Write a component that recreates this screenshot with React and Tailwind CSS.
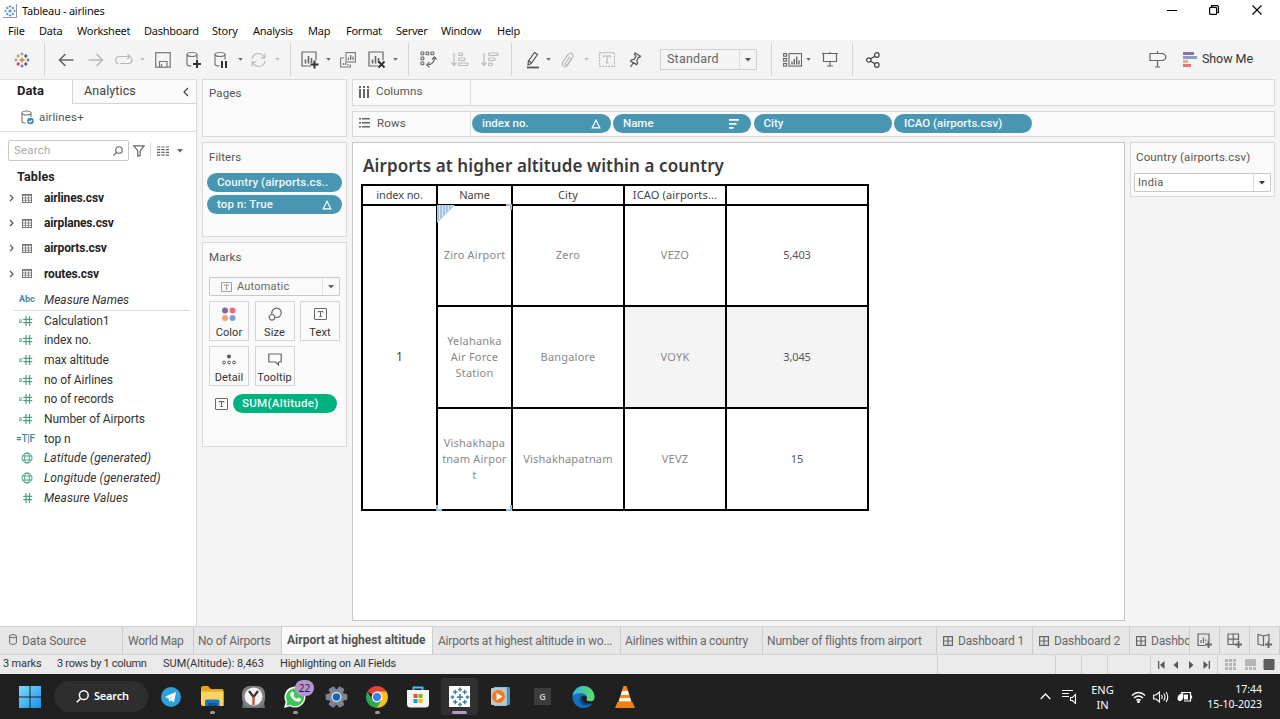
import React from "react";

const Svg = ({ w = 16, h = 16, vb, className = "", sw = 1.2, children }) => (
  <svg width={w} height={h} viewBox={vb || `0 0 ${w} ${h}`} fill="none" stroke="currentColor" strokeWidth={sw} className={`shrink-0 ${className}`}>
    {children}
  </svg>
);

const Caret = ({ className = "text-[#666]" }) => (
  <svg width="6" height="4" viewBox="0 0 6 4" className={`shrink-0 ${className}`}>
    <path d="M0 0h6L3 3.6z" fill="currentColor" />
  </svg>
);
const SmallCaret = ({ className = "text-[#666]" }) => (
  <svg width="5" height="3" viewBox="0 0 6 4" className={`shrink-0 ${className}`}>
    <path d="M0 0h6L3 3.6z" fill="currentColor" />
  </svg>
);

const Cell = ({ className, children }) => <div className={`flex h-full shrink-0 items-center ${className}`}>{children}</div>;
const Divider = ({ className }) => (
  <Cell className={className}>
    <div className="h-[33px] w-px bg-[#d4d4d4]" />
  </Cell>
);

const plus = (x, y, r) => `M${x - r} ${y}h${2 * r}M${x} ${y - r}v${2 * r}`;

const TableauLogo = ({ size = 16, mono = false }) => {
  const c = (v) => (mono ? "#4a83ad" : v);
  return (
    <svg width={size} height={size} viewBox="0 0 16 16" fill="none" strokeWidth="1.2" className="shrink-0">
      <path d={plus(8, 8, 2.5)} stroke={c("#e8762c")} strokeWidth="1.4" />
      <path d={plus(8, 2, 1.6)} stroke={c("#7199a6")} />
      <path d={plus(8, 14, 1.6)} stroke={c("#5b6591")} />
      <path d={plus(2, 8, 1.5)} stroke={c("#7199a6")} />
      <path d={plus(14, 8, 1.5)} stroke={c("#5b6591")} />
      <path d={plus(4.2, 4, 1.8)} stroke={c("#eb912c")} />
      <path d={plus(11.8, 4, 1.8)} stroke={c("#1f457e")} />
      <path d={plus(4.2, 12, 1.8)} stroke={c("#c72035")} />
      <path d={plus(11.8, 12, 1.8)} stroke={c("#1f457e")} />
    </svg>
  );
};

const Cylinder = ({ children }) => (
  <Svg w={16} h={18} className="text-[#777]">
    <ellipse cx="6" cy="3.5" rx="5" ry="2" />
    <path d="M1 3.5v9.5q0 2 4.5 2M11 3.5v5" />
    {children}
  </Svg>
);

const ChartBox = ({ children }) => (
  <Svg w={18} h={18} className="text-[#666]">
    <path d="M10 15H1V1h14v8" />
    <path d="M4.500 8.500v4M7.500 5v7.500M10.500 7v5" strokeWidth="1.6" />
    {children}
  </Svg>
);

const TBox = ({ w = 13, h = 12, className = "text-[#666]" }) => (
  <Svg w={w} h={h} vb="0 0 13 12" sw={1} className={className}>
    <rect x=".5" y=".5" width="12" height="11" rx=".5" />
    <path d="M4 4.500V3.500h5v1M6.500 3.500v5M5.300 8.500h2.400" />
  </Svg>
);

const Delta = () => (
  <Svg w={10} h={10} sw={1.2} className="text-white">
    <path d="M5 1.200L8.800 8.800H1.200z" />
  </Svg>
);

const Pill = ({ className = "", icon, children }) => (
  <div className={`flex h-[19px] shrink-0 items-center justify-between rounded-full bg-[#4996b2] pr-[10px] pl-[10px] text-[11.5px] font-medium text-[#f2f9fb] ${className}`}>
    <span className="whitespace-nowrap">{children}</span>
    {icon}
  </div>
);

const menus = [
  ["File", "w-[31px]"], ["Data", "w-[38px]"], ["Worksheet", "w-[67px]"], ["Dashboard", "w-[68px]"], ["Story", "w-[41px]"],
  ["Analysis", "w-[55px]"], ["Map", "w-[38px]"], ["Format", "w-[50px]"], ["Server", "w-[45px]"], ["Window", "w-[56px]"], ["Help", "w-[40px]"],
];

function WindowHeader() {
  return (
    <header className="bg-white text-[#111]">
      <div className="flex h-[22px] items-center pl-[3px]">
        <div className="flex size-[14px] items-center justify-center border-r border-b border-[#999]">
          <TableauLogo size={12} mono />
        </div>
        <span className="ml-[5px] text-[11px] tracking-[-0.25px]">Tableau - airlines</span>
        <div className="ml-auto flex items-center pr-[18px] pb-[2px] text-black">
          <Svg w={10} h={10} sw={1}><path d="M0 5.500h10" /></Svg>
          <Svg w={10} h={10} sw={1.2} className="ml-[32px]">
            <rect x=".6" y="2.400" width="7" height="7" rx="1" />
            <path d="M2.500 2V.600h5.400q1.500 0 1.500 1.500V7.500H8" />
          </Svg>
          <Svg w={10} h={10} sw={1.1} className="ml-[33px]"><path d="M.5.5l9 9M9.500.5l-9 9" /></Svg>
        </div>
      </div>
      <nav className="flex h-[18px] items-center pl-2 text-[11px] tracking-[-0.25px]">
        {menus.map(([m, w]) => <span key={m} className={w}>{m}</span>)}
      </nav>
    </header>
  );
}

function Toolbar() {
  return (
    <div className="flex h-[39px] items-center bg-[#f4f4f4] pl-[14px] font-[Roboto]">
      <Cell className="w-[30px]"><TableauLogo /></Cell>
      <Divider className="w-[14px]" />
      <Cell className="w-[30px]"><Svg w={16} h={14} sw={1.6} className="text-[#666]"><path d="M15.500 7H1.500M7.500 1L1.500 7l6 6" /></Svg></Cell>
      <Cell className="w-[27px]"><Svg w={16} h={14} sw={1.500} className="text-[#b8b8b8]"><path d="M.5 7h14M8.500 1l6 6-6 6" /></Svg></Cell>
      <Cell className="w-[25px]"><Svg w={18} h={12} className="text-[#b8b8b8]"><path d="M3.500 9.500h-1Q.8 9 .8 6t2.700-3.500H15M12.200 0l3 2.500-3 2.500M5 9.500h9Q17 9 17 6q0-1.500-1-2.500" /></Svg></Cell>
      <Cell className="w-[15px]"><SmallCaret className="text-[#bbb]" /></Cell>
      <Cell className="w-[31px]"><Svg w={16} h={16} className="text-[#777]"><rect x=".7" y=".7" width="14.500" height="14.500" /><path d="M4.500 15V9.500h7.500V15M6.500 15v-3" /></Svg></Cell>
      <Cell className="w-[28px]"><Cylinder><path d="M11 9v8M7 13h8" stroke="#333" strokeWidth="2" /></Cylinder></Cell>
      <Cell className="w-[24px]"><Cylinder><path d="M8 10v7M12 10v7" stroke="#333" strokeWidth="2" /></Cylinder></Cell>
      <Cell className="w-[12px]"><SmallCaret /></Cell>
      <Cell className="w-[25px]"><Svg w={17} h={16} className="text-[#bbb]"><path d="M2 7Q3 1.500 8.500 1.500q4 0 6 4M15 1.500v4.300h-4.300M15 9q-1 5.500-6.500 5.500-4 0-6-4M2 14.500v-4.300h4.300" /></Svg></Cell>
      <Cell className="w-[15px]"><SmallCaret className="text-[#bbb]" /></Cell>
      <Divider className="w-[11px]" />
      <Cell className="w-[25px]"><ChartBox><path d="M13.500 9.500v8M9.500 13.500h8" stroke="#333" strokeWidth="2" /></ChartBox></Cell>
      <Cell className="w-[14px]"><SmallCaret /></Cell>
      <Cell className="w-[28px]"><Svg w={16} h={16} sw={1.100} className="text-[#777]"><path d="M4 6H.6v9h9.800v-2.500" /><rect x="6" y=".6" width="9.400" height="9.400" /><path d="M8.500 5.500v2.500M10.700 3v5M13 4.500v3.500M3.500 11v2M5.700 11v2M8 12v1.500" strokeWidth="1.300" /></Svg></Cell>
      <Cell className="w-[25px]"><ChartBox><path d="M10.500 10.500l6 6M16.500 10.500l-6 6" stroke="#333" strokeWidth="2" /></ChartBox></Cell>
      <Cell className="w-[15px]"><SmallCaret /></Cell>
      <Divider className="w-[12px]" />
      <Cell className="w-[31px]">
        <Svg w={17} h={17} sw={1.100} className="text-[#666]">
          {[[1, 1], [6, 1], [11, 1], [1, 6], [1, 11]].map(([x, y]) => <rect key={`${x}-${y}`} x={x} y={y} width="2.800" height="2.800" rx=".5" />)}
          <path d="M14.500 6.500q0 6.500-7 7.500M12 8.500l2.600-2.600 2 2.600M9.500 11l-2.800 3 2.800 2.400" />
        </Svg>
      </Cell>
      <Cell className="w-[30px]"><Svg w={18} h={15} className="text-[#bbb]"><path d="M3 1v12.500M.5 10.500L3 13.500l2.500-3" /><rect x="7.500" y="1" width="4" height="2.500" rx="1" /><rect x="7.500" y="6" width="6.500" height="2.500" rx="1" /><rect x="7.500" y="11" width="9.500" height="2.500" rx="1" /></Svg></Cell>
      <Cell className="w-[30px]"><Svg w={18} h={15} className="text-[#bbb]"><path d="M3 1v12.500M.5 10.500L3 13.500l2.500-3" /><rect x="7.500" y="1" width="9.500" height="2.500" rx="1" /><rect x="7.500" y="6" width="6.500" height="2.500" rx="1" /><rect x="7.500" y="11" width="4" height="2.500" rx="1" /></Svg></Cell>
      <Divider className="w-[16px]" />
      <Cell className="w-[19px]"><Svg w={12} h={18} className="text-[#555]"><path d="M2.500 13.500L1 14l.5-4L7.500 1.500l3 2L4.500 12zM1.800 9.800l3 2.200" /><path d="M0 16.500h12" strokeWidth="1.800" /></Svg></Cell>
      <Cell className="w-[15px]"><SmallCaret /></Cell>
      <Cell className="w-[23px]"><Svg w={13} h={16} sw={1.100} className="text-[#b5b5b5]"><path d="M9 4.500L4.500 11q-.8 1.500.3 2 1 .5 1.800-.8L11.500 5q1.300-2.500-.7-3.700-2-1-3.500 1L2 10q-1.500 3 .5 4.400 2.300 1.200 4-1.200L11 6.500" /></Svg></Cell>
      <Cell className="w-[15px]"><SmallCaret className="text-[#bbb]" /></Cell>
      <Cell className="w-[30px]"><Svg w={16} h={15} sw={1.100} className="text-[#b5b5b5]"><rect x=".6" y=".6" width="14.800" height="13.800" strokeDasharray="2 1" /><path d="M4.500 5.500V4h7v1.500M8 4v7M6.500 11h3" /></Svg></Cell>
      <Cell className="w-[31px]"><Svg w={13} h={16} className="text-[#555]"><path d="M6 1l5.500 3.200-.8 1.200-1.200-.2-1.800 3.500.9 2.600-1 1.300-6-3.600.9-1.300 2.600-.3 1.900-3.400-1.500-1.600zM4.300 10.800L1.500 15" /></Svg></Cell>
      <div className="mr-[14px] flex h-[21px] w-[97px] shrink-0 items-center border border-[#cfcfcf] pl-[6px] text-[12.5px] tracking-[0.2px] text-[#666]">
        <span>Standard</span>
        <div className="ml-auto flex h-full w-[17px] items-center justify-center border-l border-[#ddd]"><Caret className="text-[#555]" /></div>
      </div>
      <Divider className="w-[12px]" />
      <Cell className="w-[23px]"><Svg w={20} h={14} sw={1.100} className="text-[#666]"><rect x=".6" y=".6" width="3" height="2.600" /><rect x=".6" y="5.500" width="3" height="2.600" /><rect x=".6" y="10.500" width="3" height="2.600" /><rect x="6" y=".6" width="12.500" height="12.500" /><path d="M9 8.500v3M11.300 6v5.500M13.700 3.500v8M16 7.500v4" strokeWidth="1.400" /></Svg></Cell>
      <Cell className="w-[16px]"><SmallCaret /></Cell>
      <Cell className="w-[30px]"><Svg w={16} h={15} className="text-[#666]"><path d="M0 1.500h16M1.500 1.500v8h13v-8M8 9.500v4.500M5 14h6M8 0v1.500" /></Svg></Cell>
      <Divider className="w-[14px]" />
      <Cell><Svg w={14} h={16} className="text-[#444]"><circle cx="2.800" cy="8" r="2.200" /><circle cx="10.800" cy="3" r="2.300" /><circle cx="10.800" cy="13" r="2.300" /><path d="M4.700 6.800l4.200-2.600M4.700 9.200l4.200 2.600" /></Svg></Cell>
      <div className="ml-auto flex items-center pr-[27px]">
        <Svg w={18} h={17} className="text-[#666]"><path d="M1 2.500h12.500q3 .8 3.500 3.500-.5 2.700-3.500 3.500H1zM8.500 0v2.500M8.500 9.500V16M6 16h5" /></Svg>
        <svg width="14" height="15" className="ml-[16px]">
          <path d="M0 0h11v3H0z" fill="#8a719b" /><path d="M0 4h14v3H0z" fill="#7fa3c9" />
          <path d="M0 8h5v3H0z" fill="#f0a88a" /><path d="M0 12h8v3H0z" fill="#e8717f" />
        </svg>
        <span className="ml-[5px] text-[12.5px] tracking-[-0.05px] text-[#333]">Show Me</span>
      </div>
    </div>
  );
}

const HashIcon = ({ calc }) => (
  <Svg w={14} h={10} sw={1.200} className="text-[#4ba581]">
    {calc && <path d="M0 4h3.200M0 6.200h3.200" />}
    <path d="M7 0v10M10.500 0v10M4.200 3.300h9M4.200 6.700h9" />
  </Svg>
);
const Globe = () => (
  <Svg w={12} h={12} sw={1} className="text-[#4ba581]">
    <circle cx="6" cy="6" r="5" /><ellipse cx="6" cy="6" rx="2.300" ry="5" /><path d="M1.500 4h9M1.500 8h9" />
  </Svg>
);

const fields = [
  ["calc", "Calculation1"], ["calc", "index no."], ["calc", "max altitude"], ["calc", "no of Airlines"], ["calc", "no of records"],
  ["calc", "Number of Airports"], ["bool", "top n"], ["geo", "Latitude (generated)"], ["geo", "Longitude (generated)"], ["num", "Measure Values"],
];

function DataPane() {
  return (
    <aside className="flex w-[197px] shrink-0 flex-col border-r border-[#d9d9d9] bg-white">
      <div className="flex h-[25px] shrink-0 border-t border-[#ddd]">
        <div className="w-[72px] pt-[1px] pl-[17px] text-[13px] font-bold tracking-[0.1px] text-[#222]">Data</div>
        <div className="flex flex-1 items-center justify-between border-b border-l border-[#d4d4d4] bg-[#fafafa] pr-[7px] pl-[11px] text-[12.5px] tracking-[0.1px] text-[#444]">
          Analytics
          <Svg w={6} h={10}><path d="M5 1L1 5l4 4" /></Svg>
        </div>
      </div>
      <div className="flex h-[28px] items-center border-b border-[#e0e0e0] pl-[21px] text-[11.5px] tracking-[0.15px] text-[#555]">
        <svg width="13" height="15" fill="none" stroke="#777" strokeWidth="1.100" className="mr-[5px]">
          <ellipse cx="5.500" cy="3" rx="4.500" ry="2" /><path d="M1 3v8.500q0 1.500 3.500 1.500M10 3v4" />
          <circle cx="9.500" cy="11" r="3.300" fill="#3d87a8" stroke="none" /><path d="M8 11l1.200 1.200 2-2.200" stroke="#fff" />
        </svg>
        airlines+
      </div>
      <div className="mt-[8px] flex h-[21px] items-center pl-[8px] text-[#666]">
        <div className="flex h-full w-[121px] items-center justify-between rounded-[2px] border border-[#c8c8c8] pr-[5px] pl-[5px] text-[11.5px] tracking-[0.2px] text-[#aaa]">
          Search
          <Svg w={10} h={10} sw={1.100} className="text-[#666]"><circle cx="6" cy="4" r="3.300" /><path d="M3.500 6.500L.5 9.500" /></Svg>
        </div>
        <Svg w={12} h={12} className="ml-[4px]"><path d="M.8.800h10.400L7.200 6v4.500l-2.400.8V6z" /></Svg>
        <div className="mx-[5px] h-[17px] w-px bg-[#ddd]" />
        <svg width="12" height="10" className="ml-px" stroke="#666" strokeWidth="1.200"><path d="M0 1h12M0 3.700h12M0 6.400h12M0 9.100h12" strokeDasharray="3.200 1.200" /></svg>
        <Caret className="ml-[8px]" />
      </div>
      <div className="mt-[6px] h-[19px] pl-[17px] text-[12.500px] leading-[19px] font-bold tracking-[0.15px] text-[#222]">Tables</div>
      {["airlines.csv", "airplanes.csv", "airports.csv", "routes.csv"].map((t) => (
        <div key={t} className="flex h-[25.2px] shrink-0 items-center pb-px pl-[9px] text-[12px] font-bold tracking-[-0.15px] text-[#222]">
          <Svg w={5} h={8} className="text-[#555]"><path d="M1 1l3 3-3 3" /></Svg>
          <svg width="10" height="9" className="mr-[12px] ml-[8px]" fill="none" stroke="#777"><rect x=".5" y=".5" width="9" height="8" /><path d="M0 1.500h10M0 4h10M0 6.300h10M3.500 2v7M6.500 2v7" strokeWidth=".8" /></svg>
          {t}
        </div>
      ))}
      <div className="mr-[6px] ml-[14px] flex h-[24px] shrink-0 items-center border-b border-[#d5d9dc] pt-[3px] pl-[5px] text-[12px] text-[#333] italic">
        <span className="w-[25px] text-[9px] font-bold text-[#4589a8] not-italic">Abc</span>
        Measure Names
      </div>
      <div>
        {fields.map(([k, t]) => (
          <div key={t} className="flex h-[19.7px] items-center pl-[16px] text-[12px] text-[#333]">
            <div className="flex w-[28px] items-center pl-[3px]">
              {k === "calc" && <HashIcon calc />}
              {k === "num" && <HashIcon />}
              {k === "geo" && <span className="ml-[2px]"><Globe /></span>}
              {k === "bool" && <span className="-ml-[3px] text-[10px] font-medium tracking-[-0.2px] text-[#3f87a6]">=T|F</span>}
            </div>
            <span className={k === "geo" || k === "num" ? "tracking-[0.1px] italic" : "tracking-[-0.1px]"}>{t}</span>
          </div>
        ))}
      </div>
    </aside>
  );
}

const MarkButton = ({ label, children }) => (
  <div className="flex h-[40px] w-[40px] flex-col items-center border border-[#d4d4d4] text-[11px] text-[#333]">
    <div className="flex h-[24px] items-center">{children}</div>
    <span className="leading-[13px]">{label}</span>
  </div>
);

function CardsColumn() {
  const card = "shrink-0 border border-[#d9d9d9] bg-[#fafafa]";
  return (
    <div className="flex w-[145px] shrink-0 flex-col gap-[5px] text-[11.5px] tracking-[0.1px] text-[#555]">
      <div className={`${card} h-[58px] pt-[5px] pl-[6px]`}>Pages</div>
      <div className={`${card} h-[95px] pt-[6px] pl-[4px]`}>
        <div className="pl-[2px]">Filters</div>
        <Pill className="mt-[7px] w-[135px]">Country (airports.cs..</Pill>
        <Pill className="mt-[3px] w-[135px]" icon={<Delta />}>top n: True</Pill>
      </div>
      <div className={`${card} h-[205px] pt-[6px] pl-[6px]`}>
        Marks
        <div className="mt-[11px] flex h-[19px] w-[131px] items-center rounded-[1px] border border-[#c8c8c8] pl-[11px] text-[11px] tracking-[0.2px] text-[#666]">
          <TBox w={11} h={10} className="mr-[5px] text-[#888]" />
          Automatic
          <div className="ml-auto flex h-full w-[17px] items-center justify-center border-l border-[#e2e2e2]"><Caret /></div>
        </div>
        <div className="mt-[5px] grid w-[131px] grid-cols-[40px_40px_40px] gap-x-[5.500px] gap-y-[5px]">
          <MarkButton label="Color">
            <svg width="14" height="14"><circle cx="3" cy="3.500" r="3" fill="#7c6a99" /><circle cx="10.500" cy="3.500" r="3" fill="#ee6b7c" /><circle cx="3" cy="11" r="3" fill="#f2a36f" /><circle cx="10.500" cy="11" r="3" fill="#7da0cc" /></svg>
          </MarkButton>
          <MarkButton label="Size">
            <Svg w={14} h={14} className="text-[#666]"><path d="M4 7a4.700 4.700 0 1 1 3.200 3.300" /><circle cx="4" cy="10.300" r="2.800" /></Svg>
          </MarkButton>
          <MarkButton label="Text"><TBox /></MarkButton>
          <MarkButton label="Detail">
            <Svg w={14} h={11} sw={1} className="text-[#555]"><circle cx="7" cy="2.500" r="2" fill="currentColor" stroke="none" /><circle cx="2" cy="8.500" r="1.400" /><circle cx="7" cy="8.500" r="1.400" /><circle cx="12" cy="8.500" r="1.400" /></Svg>
          </MarkButton>
          <MarkButton label="Tooltip">
            <Svg w={14} h={13} className="text-[#666]"><path d="M.8 1h12.400v8h-2.700v3L7.500 9H.8z" /></Svg>
          </MarkButton>
        </div>
        <div className="mt-[8px] flex items-center pl-[6px]">
          <TBox w={13} h={12} />
          <div className="ml-[5px] flex h-[19px] w-[104px] items-center rounded-full bg-[#00b180] pl-[9px] text-[11.5px] font-medium tracking-[0.3px] text-[#f2fbf8]">SUM(Altitude)</div>
        </div>
      </div>
    </div>
  );
}

const Shelf = ({ icon, label, children }) => (
  <div className="flex h-[26.500px] shrink-0 items-center border border-[#d9d9d9] bg-[#fafafa]">
    <div className="flex h-full w-[118px] items-center border-r border-[#ddd] pb-px pl-[6px] text-[11.5px] tracking-[0.15px] text-[#555]">
      {icon}
      {label}
    </div>
    <div className="flex items-center gap-[2.500px] pl-px">{children}</div>
  </div>
);

const Td = ({ className = "bg-white", children }) => (
  <div className={`flex items-center justify-center pb-px text-center whitespace-pre-line ${className}`}>{children}</div>
);

function Viz() {
  const hd = "bg-white text-[11px] text-[#444]";
  return (
    <main className="h-[479px] w-[773px] shrink-0 border border-[#c6c6c6] bg-white pt-[10px] pl-[8px] font-['Noto_Sans']">
      <h1 className="h-[31px] pl-[2px] text-[17px] leading-[25px] font-semibold tracking-[0.1px] text-[#3a3a3a]">Airports at higher altitude within a country</h1>
      <div className="relative grid w-[508px] grid-cols-[73px_73px_110px_100px_140px] grid-rows-[18px_99px_100px_100px] gap-[2px] bg-black p-[2px] text-[11px] leading-[16px] tracking-[0.2px] text-[#888]">
        <Td className={`${hd} tracking-[-0.1px]`}>index no.</Td><Td className={`${hd} tracking-[-0.1px]`}>Name</Td><Td className={hd}>City</Td><Td className={`${hd} tracking-[0.15px]`}>ICAO (airports...</Td><Td className={hd} />
        <Td className="row-span-3 bg-white text-[12px] text-[#444]">1</Td>
        <Td>Ziro Airport</Td><Td>Zero</Td><Td>VEZO</Td><Td className="bg-white tracking-[-0.1px] text-[#555]">5,403</Td>
        <Td>{"Yelahanka\nAir Force\nStation"}</Td><Td>Bangalore</Td><Td className="bg-[#f4f4f4]">VOYK</Td><Td className="bg-[#f4f4f4] tracking-[-0.1px] text-[#555]">3,045</Td>
        <Td>{"Vishakhapa\ntnam Airpor\nt"}</Td><Td>Vishakhapatnam</Td><Td>VEVZ</Td><Td className="bg-white tracking-[-0.1px] text-[#555]">15</Td>
        <svg width="76" height="307" className="absolute top-[20px] left-[75px]">
          <path d="M1 1h18L1 19z" fill="#a5c6de" />
          <path d="M3.500 1.500v14M6.500 1.500v11M9.500 1.500v8M12.500 1.500v5M15.500 1.500v2" stroke="#d7e8f3" />
          <path d="M70 0h6v6h-2V2h-4zM0 301v6h6v-2H2v-4zM76 301v6h-6v-2h4v-4z" fill="#9dbdd4" />
        </svg>
      </div>
    </main>
  );
}

function Workspace() {
  return (
    <div className="flex w-[923px] flex-col">
      <Shelf label="Columns" icon={<svg width="10" height="12" className="mr-[7px]" fill="#666"><path d="M0 0h2v2H0zM0 3h2v9H0zM4 0h2v2H4zM4 3h2v9H4zM8 0h2v2H8zM8 3h2v9H8z" /></svg>} />
      <div className="h-[5px] shrink-0" />
      <Shelf label="Rows" icon={<svg width="11" height="10" className="mr-[7px]" fill="#666"><path d="M0 0h2v1.600H0zM3 0h8v1.600H3zM0 4h2v1.600H0zM3 4h8v1.600H3zM0 8h2v1.600H0zM3 8h8v1.600H3z" /></svg>}>
        <Pill className="w-[138.500px]" icon={<Delta />}>index no.</Pill>
        <Pill className="w-[138px]" icon={<svg width="11" height="10" fill="#fff" className="mr-px"><path d="M0 0h10v1.800H0zM0 4h7.500v1.800H0zM0 8h4.500v1.800H0z" /></svg>}>Name</Pill>
        <Pill className="w-[138px]">City</Pill>
        <Pill className="w-[138px]">ICAO (airports.csv)</Pill>
      </Shelf>
      <div className="mt-[5px] flex gap-[5px]">
        <Viz />
        <div className="h-[55px] w-[145px] border border-[#d9d9d9] bg-[#fafafa] pt-[6px] pl-[3px] text-[11.5px] tracking-[0.15px] text-[#555]">
          <div className="pl-[2px]">Country (airports.csv)</div>
          <div className="mt-[7px] flex h-[19px] w-[137px] items-center rounded-[1px] border border-[#c8c8c8] bg-white pl-[3px] text-[11px] tracking-[0.3px]">
            India
            <div className="ml-auto flex h-full w-[17px] items-center justify-center border-l border-[#ddd]"><Caret className="text-[#333]" /></div>
          </div>
        </div>
      </div>
    </div>
  );
}

const GridIcon = () => <Svg w={10} h={10} className="mr-[5px]"><rect x=".6" y=".6" width="8.800" height="8.800" /><path d="M5 0v10M0 5h10" /></Svg>;

function SheetTabs() {
  const tab = "flex h-full shrink-0 items-center overflow-hidden border-r border-[#cdcdcd] whitespace-nowrap";
  return (
    <div className="flex h-[29px] border-y border-[#d2d2d2] bg-[#e6e6e6] text-[12px] tracking-[-0.15px] text-[#666]">
      <div className={`${tab} w-[123px] pl-[9px] tracking-[-0.1px]`}>
        <Svg w={8} h={11} sw={1} className="mr-[5px] mb-[2px]"><ellipse cx="4" cy="2.200" rx="3.400" ry="1.600" /><path d="M.6 2.200v6.600q0 1.600 3.400 1.600t3.400-1.600V2.200" /></Svg>
        Data Source
      </div>
      <div className={`${tab} w-[71px] pl-[5px] tracking-[-0.25px]`}>World Map</div>
      <div className={`${tab} w-[88px] pl-[4px] tracking-[-0.2px]`}>No of Airports</div>
      <div className={`${tab} w-[151px] bg-[#fafafa] pb-[2px] pl-[5px] font-bold tracking-[0px] text-[#555]`}>Airport at highest altitude</div>
      <div className={`${tab} w-[188px] pl-[5px] tracking-[-0.22px]`}>Airports at highest altitude in wo...</div>
      <div className={`${tab} w-[142px] pl-[4px] tracking-[-0.18px]`}>Airlines within a country</div>
      <div className={`${tab} w-[174px] pl-[4px] tracking-[-0.18px]`}>Number of flights from airport</div>
      <div className={`${tab} w-[96px] pl-[6px]`}><GridIcon />Dashboard 1</div>
      <div className={`${tab} w-[97px] pl-[6px]`}><GridIcon />Dashboard 2</div>
      <div className={`${tab} w-[60px] pl-[6px]`}><GridIcon />Dashbo</div>
      <div className={`${tab} w-[30px] justify-center`}><Svg w={15} h={15}><path d="M8 12.500H1V1h11v7M4 7v3M6.500 4.500V10M9 6.500V8" /><path d="M11.500 8v7M8 11.500h7" strokeWidth="1.800" /></Svg></div>
      <div className={`${tab} w-[30px] justify-center`}><Svg w={15} h={15}><path d="M8 11.500H1V1h10.500v6.500M6.200 1v10.500M1 6.200h10.500" /><path d="M11.500 8v7M8 11.500h7" strokeWidth="1.800" /></Svg></div>
      <div className={`${tab} w-[30px] justify-center`}><Svg w={15} h={15}><path d="M6.500 3v9.500L1 11V1.500zL12 1.500V8" /><path d="M11.500 8v7M8 11.500h7" strokeWidth="1.800" /></Svg></div>
    </div>
  );
}

function StatusBar() {
  const cell = "h-full shrink-0 border-l border-[#d0d0d0]";
  return (
    <div className="flex h-[19px] items-center bg-[#eaeaea] pl-[3px] text-[11px] tracking-[-0.15px] text-[#333]">
      <span className="w-[54px]">3 marks</span>
      <span className="w-[106px] tracking-[-0.3px]">3 rows by 1 column</span>
      <span className="w-[117px] tracking-[0px]">SUM(Altitude): 8,463</span>
      <span className="tracking-[-0.2px]">Highlighting on All Fields</span>
      <div className="ml-auto flex h-full">
        <div className={`${cell} w-[118px]`} />
        <div className={`${cell} w-[26px]`} />
        <div className={`${cell} w-[26px]`} />
        <div className={`${cell} w-[43px]`} />
        <div className={`${cell} flex w-[67px] items-center pl-[7px]`}>
          <svg width="53" height="8" fill="#555"><path d="M0 0h1.300v8H0zM6.500 0v8L2 4zM20 0v8l-4.500-4zM31 0v8l4.500-4zM45.500 0v8L50 4zM50.700 0H52v8h-1.300z" /></svg>
        </div>
        <div className={`${cell} flex w-[63px] items-center pl-[7px]`}>
          <svg width="50" height="11">
            <path d="M0 0h3v3H0zM4 0h3v3H4zM8 0h3v3H8zM0 4h3v3H0zM4 4h3v3H4zM8 4h3v3H8zM0 8h3v3H0zM4 8h3v3H4zM8 8h3v3H8zM20 0h11v7H20zM20 8h3v3h-3zM24 8h3v3h-3zM28 8h3v3h-3z" fill="#b5b5b5" />
            <path d="M39 .5h10v10H39z" fill="#5e5e5e" stroke="#555" />
          </svg>
        </div>
      </div>
    </div>
  );
}

const TaskIcon = ({ className, dot, children }) => (
  <div className={`relative flex h-full shrink-0 items-center ${className}`}>
    {children}
    {dot && <div className="absolute bottom-[5px] left-[9px] h-[3px] w-[5px] rounded-full bg-[#9a9a9a]" />}
  </div>
);

function Taskbar() {
  return (
    <footer className="flex h-[45px] items-center bg-[#202020] pl-[19px] text-white">
      <TaskIcon className="w-[35px]">
        <svg width="22" height="22"><defs><linearGradient id="win" x2="1" y2="1"><stop stopColor="#7fdcff" /><stop offset="1" stopColor="#1a8fe8" /></linearGradient></defs><path d="M0 0h10.500v10.500H0zM11.500 0H22v10.500H11.500zM0 11.500h10.500V22H0zM11.500 11.500H22V22H11.500z" fill="url(#win)" /></svg>
      </TaskIcon>
      <div className="mr-[13px] flex h-[31px] w-[94px] items-center rounded-full bg-[#2e2e2e] pl-[22px] text-[11px] font-semibold tracking-[-0.2px]">
        <Svg w={13} h={13} sw={1.500} className="mr-[5px]"><circle cx="7.800" cy="5.200" r="4.400" /><path d="M4.600 8.400L.8 12.300" /></Svg>
        Search
      </div>
      <TaskIcon className="w-[40px]">
        <svg width="20" height="20"><circle cx="10" cy="10" r="10" fill="#2ba0dc" /><path d="M4 9.800L15 5l-2 10.500-3.200-2.300-1.700 1.600-.3-3z" fill="#fff" /><path d="M7.800 11.500L13 7.200l-3.700 5" fill="#b9d9ee" /></svg>
      </TaskIcon>
      <TaskIcon className="w-[41px]" dot>
        <svg width="23" height="22" className="mt-px"><path d="M0 2q0-2 2-2h5l3 3h11q1.500 0 1.500 1.500V19H0z" fill="#e5a51c" /><path d="M0 5.500h22.500V20H2q-2 0-2-2z" fill="#fdd462" /><path d="M4 20v-5q0-1.500 1.500-1.500h11.500q1.500 0 1.500 1.500v5z" fill="#1976c5" /><path d="M7 17h9v3H7z" fill="#0f5596" /></svg>
      </TaskIcon>
      <TaskIcon className="w-[42px]">
        <svg width="23" height="22"><path d="M2 10L0 22h23l-2-12z" fill="#666d73" /><rect x="0" y="0" width="23" height="21" rx="8" fill="#7c8186" /><circle cx="11.500" cy="10.500" r="9" fill="#f1f1ef" /><path d="M7 5l4.500 6L16 5" stroke="#333" strokeWidth="2.200" fill="none" /><path d="M11.500 10.500V19" stroke="#c64a2f" strokeWidth="2.200" /></svg>
      </TaskIcon>
      <TaskIcon className="w-[41px]" dot>
        <svg width="23" height="22"><path d="M0 22l1.700-6A10.500 10.500 0 1 1 6 20.300z" fill="#fff" /><path d="M2.300 19.700l1-3.800A9 9 0 1 1 6.400 19z" fill="#3dc557" /><path d="M7.500 6q1.300-1 2 .3l.8 2-.9 1.300q1.200 2.300 3.600 3.300l1.400-1.400 2.500 1.200q.4 2.600-2.300 3-5.400-.2-8.200-6-.6-2.300 1.100-3.700z" fill="#fff" /></svg>
        <div className="absolute top-[6px] left-[11px] flex h-[16px] w-[19px] items-center justify-center rounded-full bg-[#b595d0] text-[10px] text-[#2a1b38]">22</div>
      </TaskIcon>
      <TaskIcon className="w-[41px]">
        <svg width="23" height="22" viewBox="-11.500 -11 23 22"><g fill="#7b8590">{[0, 60, 120].map((a) => <rect key={a} x="-3.300" y="-10.800" width="6.600" height="21.600" rx="1.500" transform={`rotate(${a + 30})`} />)}<circle r="8" /></g><circle r="5" fill="#e8eef4" /><circle r="3.800" fill="#1464b4" /></svg>
      </TaskIcon>
      <TaskIcon className="w-[41px]" dot>
        <svg width="22" height="22" viewBox="-11 -11 22 22"><path d="M0 0L-9.500-5.500A11 11 0 0 1 9.500-5.500z" fill="#e34133" /><path d="M0-5.500H9.500A11 11 0 0 1 0 11z" fill="#fbc116" /><path d="M-9.500-5.500A11 11 0 0 0 0 11L4.700 2.700-4.700 2.700z" fill="#2da94f" /><circle r="5.400" fill="#fff" /><circle r="4.200" fill="#3f7fe8" /></svg>
      </TaskIcon>
      <TaskIcon className="w-[34px]">
        <svg width="22" height="22"><path d="M6.500 5V1.500h9V5" fill="none" stroke="#4cc2f1" strokeWidth="1.800" /><path d="M0 4h22v14q0 3.500-3.500 3.500h-15Q0 21.500 0 18z" fill="#f3f3f3" /><path d="M6.500 8h4v4h-4z" fill="#f25022" /><path d="M11.500 8h4v4h-4z" fill="#7fba00" /><path d="M6.500 13h4v4h-4z" fill="#00a4ef" /><path d="M11.500 13h4v4h-4z" fill="#ffb900" /></svg>
      </TaskIcon>
      <div className="relative mr-[13px] flex h-[37px] w-[37px] shrink-0 items-center justify-center rounded-[4px] bg-[#303030]">
        <div className="flex size-[21px] items-center justify-center bg-white"><TableauLogo size={20} mono /></div>
        <div className="absolute bottom-px left-[11px] h-[3px] w-[15px] rounded-full bg-[#b595d0]" />
      </div>
      <TaskIcon className="w-[43px]">
        <svg width="19" height="19"><rect x="5" width="14" height="18" rx="1" fill="#4f8fb5" /><rect x="3" y="0" width="13" height="19" fill="#8fc1dc" /><rect x="0" y="1" width="15" height="17" rx="1" fill="#b9c8d0" /><circle cx="7.500" cy="9.500" r="6.500" fill="#ef7a21" /><path d="M5.500 5.800l6 3.700-6 3.700z" fill="#fff" /></svg>
      </TaskIcon>
      <TaskIcon className="w-[38px]"><div className="flex h-[17px] w-[17px] items-center justify-center bg-[#3d3d3d] text-[9px] font-semibold text-[#ccc]">G</div></TaskIcon>
      <TaskIcon className="w-[43px]">
        <svg width="23" height="22"><defs><linearGradient id="edge" x2="1" y2=".3"><stop stopColor="#2bb5ee" /><stop offset="1" stopColor="#5ddc62" /></linearGradient></defs><circle cx="11.500" cy="11" r="11" fill="#1570c4" /><path d="M.6 9.500A11 11 0 0 1 22.500 11q0 4-4.500 4.300-4 0-3.500-2.300Q16 8.500 10.500 7.300 4 6.500.6 9.500z" fill="url(#edge)" /><path d="M9 9.500q-3.500 5 .5 8.800 4.500 3 10.500-.3Q12 19 11 14z" fill="#0c4c94" /><path d="M10 10q2.700-1 4.600.800.8 1.700-.2 3 .1 1.600 5.600 1.800l1.600-1.200-.6 3Q13 19 10.500 15 9.500 12 10 10z" fill="#202020" /></svg>
      </TaskIcon>
      <TaskIcon>
        <svg width="20" height="22"><path d="M8.500 0h3l5.500 17H3z" fill="#f58a1a" /><path d="M7 5h6l1.200 4H5.800zM4.800 12h10.400l1 3.200H3.800z" fill="#f4f4f4" /><path d="M2.500 16h15l2.500 6H0z" fill="#f08010" /></svg>
      </TaskIcon>
      <div className="ml-auto flex items-center pr-[18px]">
        <Svg w={11} h={7} sw={1.300}><path d="M.7 6l4.800-5 4.800 5" /></Svg>
        <Svg w={16} h={15} sw={1.100} className="ml-[11px]"><path d="M0 1.500h11M0 4.500h7M0 7.500h7M8.500 8.500h2l3-3v9l-3-3h-2z" /></Svg>
        <div className="ml-[12px] w-[25px] text-center text-[11px] leading-[15px]">ENG<br />IN</div>
        <Svg w={15} h={12} sw={1.300} className="ml-[16px]"><path d="M.8 4.500q6.700-6 13.400 0M3 7q4.500-4 9 0M5.200 9.300q2.300-1.800 4.600 0" /><circle cx="7.500" cy="10.600" r=".8" fill="currentColor" /></Svg>
        <Svg w={16} h={12} sw={1.100} className="ml-[7px]"><path d="M.6 4h2.400L6.500 1v10L3 8H.6zM8.500 4q1.500 2 0 4M10.700 2.500q2.600 3.500 0 7M13 1q3.500 5 0 10" /></Svg>
        <Svg w={16} h={12} sw={1.200} className="ml-[8px]"><path d="M4 1.500h9.500v8.500H7M14.500 4.500v3" /><path d="M7 3.500h4v5H7z" fill="currentColor" stroke="none" /><path d="M.5 8.500Q0 3 6 2q1.500 5-2 8H2z" fill="currentColor" stroke="none" /></Svg>
        <div className="ml-[10px] w-[59px] text-right text-[10.500px] leading-[15px] whitespace-nowrap">17:44<br />15-10-2023</div>
      </div>
    </footer>
  );
}

export default function App() {
  return (
    <div className="flex h-[719px] w-[1280px] flex-col overflow-hidden bg-[#f4f4f4] font-['Noto_Sans',sans-serif]">
      <WindowHeader />
      <Toolbar />
      <div className="flex h-[547px] shrink-0 font-[Roboto]">
        <DataPane />
        <div className="flex gap-[5px] pl-[5px]">
          <CardsColumn />
          <Workspace />
        </div>
      </div>
      <div className="font-[Roboto]">
        <SheetTabs />
        <StatusBar />
      </div>
      <Taskbar />
    </div>
  );
}
